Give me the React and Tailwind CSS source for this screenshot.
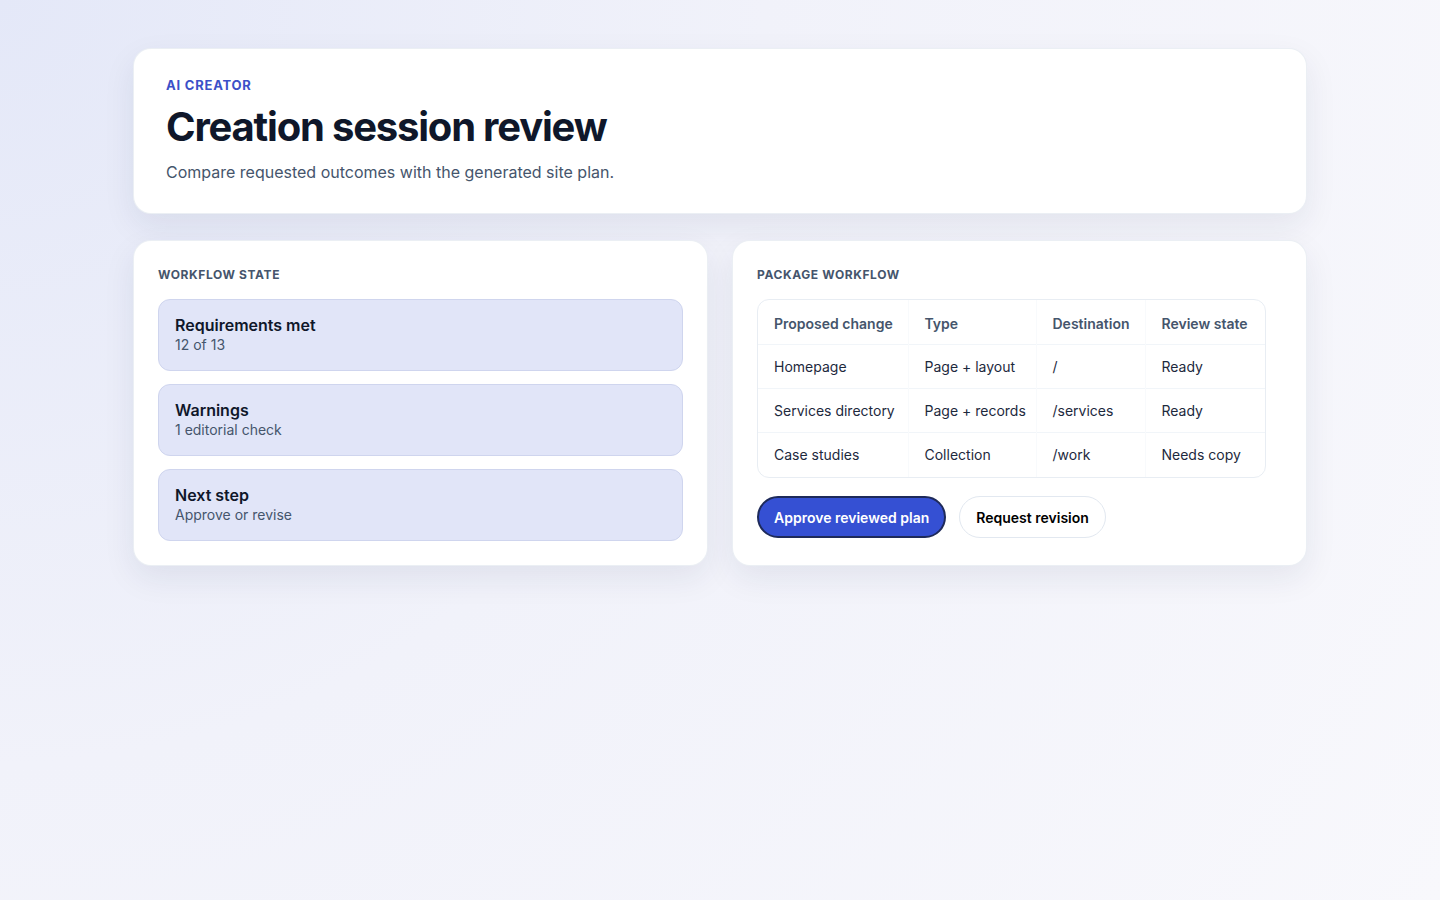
const rows = [
  { change: 'Homepage', type: 'Page + layout', dest: '/', state: 'Ready' },
  { change: 'Services directory', type: 'Page + records', dest: '/services', state: 'Ready' },
  { change: 'Case studies', type: 'Collection', dest: '/work', state: 'Needs copy' },
];

const states = [
  { title: 'Requirements met', detail: '12 of 13' },
  { title: 'Warnings', detail: '1 editorial check' },
  { title: 'Next step', detail: 'Approve or revise' },
];

export default function App() {
  return (
    <div className="min-h-screen bg-[radial-gradient(circle_at_0%_0%,#e4e8f8_0%,#f1f2fa_45%,#f8f8fc_100%)] px-[133px] pt-12 font-['Inter',sans-serif] text-slate-900">
      <div className="mx-auto max-w-[1174px]">
        <header className="rounded-[18px] border border-slate-200/70 bg-white px-8 pb-[29px] pt-[28px] shadow-[0_12px_32px_rgba(30,41,80,0.08)]">
          <p className="text-[13px] font-bold uppercase leading-4 tracking-[0.06em] text-[#3b50c8]">AI Creator</p>
          <h1 className="mt-[10px] text-[40px] font-bold leading-[48px] tracking-[-0.03em] text-[#0f172a]">Creation session review</h1>
          <p className="mt-[9px] text-[16px] leading-6 text-slate-600">Compare requested outcomes with the generated site plan.</p>
        </header>

        <div className="mt-[26px] grid grid-cols-2 gap-6">
          <section className="rounded-[18px] border border-slate-200/70 bg-white p-6 shadow-[0_12px_32px_rgba(30,41,80,0.08)]">
            <h2 className="pt-px text-[12px] font-bold uppercase leading-[18px] tracking-[0.05em] text-slate-600">Workflow state</h2>
            <div className="mt-[15px] flex flex-col gap-[13px]">
              {states.map((s) => (
                <div key={s.title} className="h-[72px] rounded-xl border border-[#cfd5ee] bg-[#e1e5f8] px-4 pt-[15px]">
                  <p className="text-[16px] font-semibold leading-5 text-[#0f172a]">{s.title}</p>
                  <p className="text-[14px] leading-5 text-slate-600">{s.detail}</p>
                </div>
              ))}
            </div>
          </section>

          <section className="rounded-[18px] border border-slate-200/70 bg-white p-6 shadow-[0_12px_32px_rgba(30,41,80,0.08)]">
            <h2 className="pt-px text-[12px] font-bold uppercase leading-[18px] tracking-[0.05em] text-slate-600">Package workflow</h2>
            <div className="mt-[15px] w-fit overflow-hidden rounded-xl border border-slate-200/80">
              <table className="table-fixed border-collapse whitespace-nowrap text-left text-[14px]">
                <thead>
                  <tr className="h-11 border-b border-slate-100">
                    <th className="w-[150px] pl-4 pr-2 pt-[3px] font-semibold text-slate-600">Proposed change</th>
                    <th className="w-[128px] border-l border-slate-50 pl-4 pr-2 pt-[3px] font-semibold text-slate-600">Type</th>
                    <th className="w-[109px] border-l border-slate-50 pl-4 pr-2 pt-[3px] font-semibold text-slate-600">Destination</th>
                    <th className="w-[120px] border-l border-slate-50 pl-4 pr-2 pt-[3px] font-semibold text-slate-600">Review state</th>
                  </tr>
                </thead>
                <tbody>
                  {rows.map((r, i) => (
                    <tr key={r.change} className={i < rows.length - 1 ? 'h-11 border-b border-slate-100' : 'h-[45px]'}>
                      <td className="pl-4 pr-2 text-slate-800">{r.change}</td>
                      <td className="border-l border-slate-50 pl-4 pr-2 text-slate-800">{r.type}</td>
                      <td className="border-l border-slate-50 pl-4 pr-2 text-slate-800">{r.dest}</td>
                      <td className="border-l border-slate-50 pl-4 pr-2 text-slate-800">{r.state}</td>
                    </tr>
                  ))}
                </tbody>
              </table>
            </div>
            <div className="mt-[18px] flex items-center gap-[13px]">
              <button type="button" className="h-[42px] rounded-full border-2 border-[#1e2a5a] bg-[#3550d3] px-[15px] text-[14px] font-semibold text-white">
                Approve reviewed plan
              </button>
              <button type="button" className="h-[42px] rounded-full border border-slate-200 bg-white px-4 text-[14px] font-semibold text-black">
                Request revision
              </button>
            </div>
          </section>
        </div>
      </div>
    </div>
  );
}
